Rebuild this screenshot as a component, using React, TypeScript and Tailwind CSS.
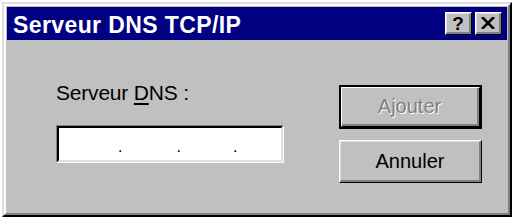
import React from "react";

const font = { fontFamily: '"Liberation Sans", Arial, sans-serif' };

function TitleButton({ children }: { children: React.ReactNode }) {
  return (
    <div className="w-[27px] h-[23px] bg-[#c0c0c0] border border-t-white border-l-white border-b-black border-r-black">
      <div className="w-full h-full flex items-center justify-center border-b-2 border-r-2 border-b-[#808080] border-r-[#808080] border-t border-l border-t-[#dfdfdf] border-l-[#dfdfdf] text-black font-bold text-[19px] leading-none">
        {children}
      </div>
    </div>
  );
}

export default function App() {
  return (
    <div className="w-[515px] h-[221px] bg-white pt-[2px] pl-[2px]" style={font}>
      <div className="w-[510px] h-[215px] bg-[#c0c0c0] border-2 border-t-[#dfdfdf] border-l-[#dfdfdf] border-b-black border-r-black">
        <div className="h-full flex flex-col p-px border-2 border-t-white border-l-white border-b-[#808080] border-r-[#808080]">
          {/* Title bar */}
          <div className="h-[33px] bg-[#000080] flex items-center justify-between pl-[6px] pr-[5px]">
            <span className="text-white font-bold text-[23px] tracking-[0.4px] leading-none pt-[3px]">
              Serveur DNS TCP/IP
            </span>
            <div className="flex gap-[3px]">
              <TitleButton>?</TitleButton>
              <TitleButton>
                <svg width="14" height="12" viewBox="0 0 14 12">
                  <path d="M1 0 L13 12 M13 0 L1 12" stroke="black" strokeWidth="2.6" />
                </svg>
              </TitleButton>
            </div>
          </div>

          {/* Body */}
          <div className="flex flex-1">
            <div className="pl-[49px] pt-[41px] w-[332px]">
              <div className="text-[21px] leading-[24px] tracking-[-0.2px] text-black">
                Serveur <span className="underline underline-offset-[3px]">D</span>NS :
              </div>
              <div className="mt-[20px] w-[228px] h-[38px] border border-t-[#808080] border-l-[#808080] border-b-white border-r-white">
                <div className="w-full h-full bg-white border-2 border-t-black border-l-black border-b-[#dfdfdf] border-r-[#dfdfdf] flex items-end pb-[5px]">
                  <span className="ml-[59px] text-[16px] leading-none">.</span>
                  <span className="ml-[54px] text-[16px] leading-none">.</span>
                  <span className="ml-[52px] text-[16px] leading-none">.</span>
                </div>
              </div>
            </div>

            <div className="pt-[45px] flex flex-col gap-[11px]">
              {/* Default (disabled) button */}
              <div className="w-[143px] h-[44px] border-2 border-black">
                <div className="w-full h-full border border-t-white border-l-white border-b-black border-r-black">
                  <div className="w-full h-full flex items-center justify-center border-b-2 border-r-2 border-b-[#808080] border-r-[#808080]">
                    <span
                      className="text-[20px] text-[#808080]"
                      style={{ textShadow: "1px 1px 0 #ffffff" }}
                    >
                      Ajouter
                    </span>
                  </div>
                </div>
              </div>
              <div className="w-[143px] h-[43px] border border-t-white border-l-white border-b-black border-r-black">
                <div className="w-full h-full flex items-center justify-center border-b-2 border-r-2 border-b-[#808080] border-r-[#808080] border-t border-l border-t-[#dfdfdf] border-l-[#dfdfdf]">
                  <span className="text-[20px] text-black">Annuler</span>
                </div>
              </div>
            </div>
          </div>
        </div>
      </div>
    </div>
  );
}
